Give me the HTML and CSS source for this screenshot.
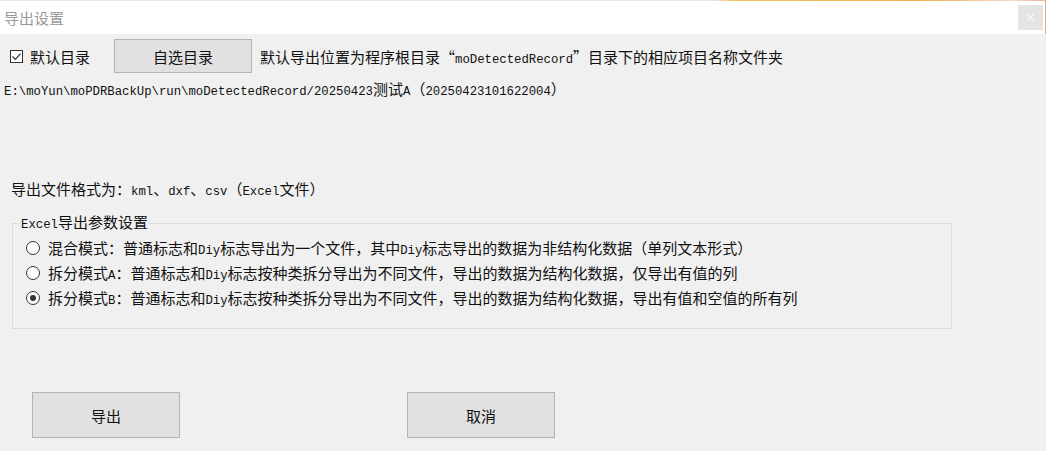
FILE: index.html
```html
<!DOCTYPE html>
<html lang="zh-CN">
<head>
	<meta charset="UTF-8">
	<title>导出设置</title>
	<link rel="stylesheet" href="styles.css">
</head>
<body>
	<div class="topstrip"></div>
	<header class="titlebar">
		<span class="title">导出设置</span>
		<button class="close">×</button>
	</header>

	<section class="dialog">

		<div class="dir-row">
			<label class="check">
				<span class="box">
					<svg width="11" height="11" viewBox="0 0 11 11"><path d="M1.5 5.5 L4.3 8.3 L9.6 2.6" fill="none" stroke="#333" stroke-width="1.2"/></svg>
				</span>
				<span>默认目录</span>
			</label>
			<button class="btn pick">自选目录</button>
			<span class="hint">默认导出位置为程序根目录“<span class="en">moDetectedRecord</span>”目录下的相应项目名称文件夹</span>
		</div>

		<p class="path"><span class="en">E:\moYun\moPDRBackUp\run\moDetectedRecord/20250423</span>测试<span class="en">A</span>（<span class="en">20250423101622004</span>）</p>

		<p class="format">导出文件格式为：<span class="en">kml</span>、<span class="en">dxf</span>、<span class="en">csv</span>（<span class="en">Excel</span>文件）</p>

		<fieldset class="group">
			<legend><span class="en">Excel</span>导出参数设置</legend>
			<label class="radio"><span class="dot"></span><span>混合模式：普通标志和<span class="en">Diy</span>标志导出为一个文件，其中<span class="en">Diy</span>标志导出的数据为非结构化数据（单列文本形式）</span></label>
			<label class="radio"><span class="dot"></span><span>拆分模式<span class="en">A</span>：普通标志和<span class="en">Diy</span>标志按种类拆分导出为不同文件，导出的数据为结构化数据，仅导出有值的列</span></label>
			<label class="radio checked"><span class="dot"></span><span>拆分模式<span class="en">B</span>：普通标志和<span class="en">Diy</span>标志按种类拆分导出为不同文件，导出的数据为结构化数据，导出有值和空值的所有列</span></label>
		</fieldset>

		<div class="actions">
			<button class="btn big">导出</button>
			<button class="btn big">取消</button>
		</div>

	</section>
</body>
</html>
```

FILE: styles.css
```css
* {
	box-sizing: border-box;
}

body {
	margin: 0;
	background-color: #f0f0f0;
	color: #111;
	font-family: "Noto Sans CJK SC", "Noto Sans", sans-serif;
	font-size: 15px;
}

.en {
	font-family: "Liberation Mono", monospace;
	font-size: 12.3px;
}

.topstrip {
	height: 1px;
	background: linear-gradient(to right, #e8e8e8 68%, #f3c46a 70%, #efb04e 88%, #f6d9cf 97%, #e8b48a 100%);
}

.titlebar {
	height: 33px;
	background-color: #fff;
	display: flex;
	align-items: center;
	justify-content: space-between;
	padding: 0 2px 0 4px;
	border-right: 1px solid #e0b080;
}

.title {
	color: #9a9a9a;
	font-size: 15px;
}

.close {
	width: 25px;
	height: 25px;
	border: 0;
	background-color: #e4e4e4;
	color: #f8f8f8;
	font-size: 16px;
	line-height: 25px;
	padding: 0;
	margin-top: -1px;
}

.btn {
	background-color: #e1e1e1;
	border: 1px solid #b4b4b4;
	font-family: inherit;
	font-size: 15px;
	color: #111;
	padding: 0;
}

.dir-row {
	display: flex;
	align-items: center;
	margin-top: 5px;
	padding-left: 10px;
	height: 34px;
}

.check {
	display: flex;
	align-items: center;
	gap: 7px;
}

.box {
	width: 13px;
	height: 13px;
	border: 1px solid #333;
	background-color: #fff;
	display: flex;
	align-items: center;
	justify-content: center;
}

.pick {
	width: 138px;
	height: 34px;
	margin-left: 24px;
}

.hint {
	margin-left: 8px;
}

.path {
	margin: 7px 0 0;
	padding-left: 4px;
	line-height: 18px;
}

.format {
	margin: 79px 0 0;
	padding-left: 11px;
	line-height: 18px;
}

.group {
	margin: 12px 0 0 12px;
	width: 940px;
	height: 116px;
	border: 1px solid #dcdcdc;
	padding: 1px 0 0 13px;
}

.group legend {
	margin-left: -6px;
	padding: 0 1px;
	font-size: 15px;
	line-height: 18px;
}

.radio {
	display: flex;
	align-items: center;
	height: 25px;
	gap: 8px;
}

.dot {
	width: 14px;
	height: 14px;
	border-radius: 50%;
	border: 1px solid #333;
	background-color: #fff;
	display: flex;
	align-items: center;
	justify-content: center;
}

.checked .dot::after {
	content: "";
	width: 6px;
	height: 6px;
	border-radius: 50%;
	background-color: #333;
}

.actions {
	display: flex;
	gap: 227px;
	margin-top: 63px;
	padding-left: 32px;
}

.big {
	width: 148px;
	height: 46px;
}
```
